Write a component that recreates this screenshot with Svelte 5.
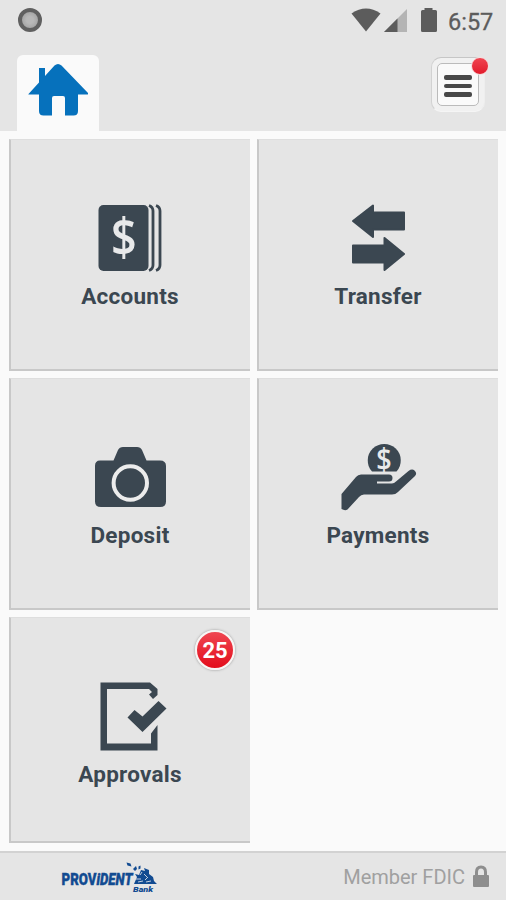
<script>
  const tiles = [
    { id: 'accounts', label: 'Accounts', view: '1 0 120 80' },
    { id: 'transfer', label: 'Transfer', view: '-1 0 120 80' },
    { id: 'deposit', label: 'Deposit', view: '1 -1 120 80' },
    { id: 'payments', label: 'Payments', view: '-1 -1 120 80' },
    { id: 'approvals', label: 'Approvals', view: '1 -2 120 80', badge: 25 },
  ]
</script>

<div class="screen">
  <header>
    <div class="status">
      <span class="recording"></span>
      <div class="indicators">
        <svg width="104" height="32" viewBox="346 4 104 32">
          <path d="M351.500 13.500Q366 3.500 380.500 13.500L366 31.500Z" />
          <path class="faded" d="M407 9V32H384Z" />
          <path d="M397.500 18.500V32H384Z" />
          <path d="M424.500 8h8v2h3q1.500 0 1.500 1.500V30.500q0 1.500-1.500 1.500h-13q-1.500 0-1.500-1.500V11.500q0-1.500 1.500-1.500h2Z" />
        </svg>
        <span class="clock">6:57</span>
      </div>
    </div>
    <nav>
      <div class="home">
        <svg width="60" height="54" viewBox="28 63 60 54">
          <path d="M28.500 94L39 82.500V68H45V76L54.500 65.500Q58 62.500 61.500 65.500L88 93Q88.500 94.500 87 94.500H78V111Q78 115.500 73.500 115.500H65V98Q65 96 63 96H54Q52 96 52 98V115.500H43.500Q39 115.500 39 111V94.500H29Q28 94.500 28.500 94Z" />
        </svg>
      </div>
      <button class="menu" aria-label="Menu">
        <span class="bars"><i></i><i></i><i></i></span>
        <span class="dot"></span>
      </button>
    </nav>
  </header>

  <main>
    {#each tiles as tile (tile.id)}
      <div class="tile">
        <svg class="icon" width="120" height="80" viewBox={tile.view}>
          {#if tile.id === 'accounts'}
            <rect x="28.500" y="10" width="50" height="66" rx="5" />
            <path class="line" d="M79 10.500Q83 12 83 16V70Q83 74 79 75.500M86 10.500Q90 12 90 16V70Q90 74 86 75.500" />
            <text transform="translate(54 60.500) scale(0.85 1)" class="dollar large">$</text>
          {:else if tile.id === 'transfer'}
            <path class="round" d="M33 26L53 10.500V17.500H84V34.500H53V42Z" />
            <path class="round" d="M84 59L64.500 43V50.500H33V67.500H64.500V75Z" />
          {:else if tile.id === 'deposit'}
            <path d="M30 25.500H43.500L48 15Q49.500 12 53 12H67Q70.500 12 72 15L76.500 25.500H90Q96 25.500 96 31V66.500Q96 72 90 72H31Q25 72 25 66.500V31Q25 25.500 30 25.500Z" />
            <circle class="lens" cx="60.300" cy="48" r="16.700" />
          {:else if tile.id === 'payments'}
            <path d="M52 36.500A16.500 16.500 0 1 1 76.500 36.500Z" />
            <text transform="translate(64 34.500) scale(0.9 1)" class="dollar small">$</text>
            <path d="M21.500 59L36 42Q38 39.500 41 39.500H69Q72.500 39.500 72.500 43Q72.500 46.500 69 46.500H57V48.500H72Q74 48.500 76 46.500L88.500 36Q92 33.500 94.500 35.500Q97.500 38 95 41L78 57Q75.500 59.500 72 59.500H44Q41 59.500 39 62L27.500 74.500Q25 76 21.500 74Z" />
          {:else}
            <path d="M30.500 7.500H80L87.500 14V20L83 24L79 19.500L82 17L79 14H37V68.500H81V58.500L87.500 50V75.500H30.500Z" />
            <path d="M57.500 42.500L64.500 35L72.500 41.500L88.500 26L96.500 33.500L72.500 57Z" />
          {/if}
        </svg>
        <span class="label">{tile.label}</span>
        {#if tile.badge}
          <span class="badge">{tile.badge}</span>
        {/if}
      </div>
    {/each}
  </main>

  <footer>
    <svg class="brand" width="100" height="36" viewBox="58 858 100 36">
      <text x="61.500" y="884" class="provident" textLength="71" lengthAdjust="spacingAndGlyphs">PROV<tspan class="slant">iDENT</tspan></text>
      <path d="M126.500 861.500l4 1l1 3l-4-1ZM133 868l3-3l1 3l-2 2ZM138.500 865.500l2-1v3l-2 1Z" />
      <path d="M134 883l3-7l-2-3l4 1l2-5l4 1l-1-3l5 2v4l4 3l1 4l3 3Z" />
      <path class="sketch" d="M136 878h5m3-5l3 3m-9 5l5-1m3 1l5-1m-9-9l-2 3m8 2l-3 3" />
      <text x="133" y="890.500" textLength="20" lengthAdjust="spacingAndGlyphs" class="bank">Bank</text>
    </svg>
    <div class="member">
      <span>Member FDIC</span>
      <svg width="18" height="24" viewBox="0 0 18 24">
        <path class="shackle" d="M4.500 11V7Q4.500 2 9 2T13.500 7V11" />
        <rect x="1" y="10" width="16" height="12" rx="1" />
      </svg>
    </div>
  </footer>
</div>

<style>
  :global(body) {
    margin: 0;
  }
  .screen {
    display: flex;
    flex-direction: column;
    height: 900px;
    background: #fafafa;
    font-family: Roboto, sans-serif;
    color: #3b4751;
  }
  svg {
    display: block;
  }
  header {
    height: 131px;
    background: #e5e5e5;
  }
  .status {
    display: flex;
    justify-content: space-between;
    height: 40px;
    padding: 0 13px 0 18px;
    align-items: center;
  }
  .recording {
    box-sizing: border-box;
    width: 24px;
    height: 24px;
    border: 4px solid #606060;
    border-radius: 50%;
    background: radial-gradient(#b8b8b8 30%, #989898);
  }
  .indicators {
    display: flex;
    align-items: center;
    fill: #5c5c5c;
  }
  .faded {
    fill: #b4b4b4;
  }
  .clock {
    width: 45px;
    margin-top: 3px;
    margin-left: -2px;
    font-size: 23.500px;
    white-space: nowrap;
    color: #5c5c5c;
    -webkit-text-stroke: 0.300px #5c5c5c;
  }
  nav {
    display: flex;
    justify-content: space-between;
    height: 91px;
  }
  .home {
    width: 82px;
    height: 76px;
    margin: 15px 0 0 17px;
    border-radius: 6px 6px 0 0;
    background: #fafafa;
    fill: #0671bc;
  }
  .home svg {
    margin: 8px 0 0 11px;
  }
  .menu {
    position: relative;
    box-sizing: border-box;
    width: 54px;
    height: 55px;
    margin: 17px 21px 0 0;
    padding: 5px;
    border: 1px solid #ddd;
    border-color: #c6c6c6 #eee #f5f5f5 #d2d2d2;
    border-radius: 10px;
    background: #f1f1f1;
  }
  .bars {
    display: flex;
    flex-direction: column;
    justify-content: center;
    gap: 4px;
    box-sizing: border-box;
    width: 42px;
    height: 43px;
    padding: 3px 6px 0;
    border: 1px solid #bbb;
    border-radius: 5px;
    background: #fafafa;
  }
  .bars i {
    height: 4.500px;
    border-radius: 2px;
    background: #484848;
  }
  .dot {
    position: absolute;
    top: -1px;
    right: -5px;
    width: 16px;
    height: 16px;
    border: 1px solid #f7dede;
    border-radius: 50%;
    background: linear-gradient(#f04450, #e21b2c);
  }
  main {
    display: grid;
    grid-template-columns: 241px 241px;
    grid-template-rows: 232px 232px 226px;
    gap: 7px;
    height: 704px;
    padding: 8px 0 8px 9px;
  }
  .tile {
    position: relative;
    display: flex;
    flex-direction: column;
    align-items: center;
    box-sizing: border-box;
    padding-top: 55px;
    border: solid #c8c8c8;
    border-width: 1px 0 2px 2px;
    border-top-color: #dedede;
    background: #e5e5e5;
  }
  .icon {
    fill: #3b4751;
  }
  .line {
    fill: none;
    stroke: #3b4751;
    stroke-width: 2.800;
  }
  .round {
    stroke: #3b4751;
    stroke-width: 2;
    stroke-linejoin: round;
  }
  .lens {
    fill: none;
    stroke: #ececec;
    stroke-width: 4;
  }
  .dollar {
    fill: #e8e9ea;
    text-anchor: middle;
    font-family: 'Open Sans', sans-serif;
    font-weight: 600;
  }
  .large {
    font-size: 53px;
  }
  .small {
    font-size: 30px;
  }
  .label {
    margin-top: 8px;
    margin-left: -1px;
    font-size: 22.500px;
    font-weight: 700;
    line-height: 26px;
    letter-spacing: 0.250px;
  }
  .badge {
    position: absolute;
    top: 12px;
    right: 15px;
    width: 36px;
    height: 36px;
    border: 2px solid #f8f5f4;
    border-radius: 50%;
    background: linear-gradient(#ef4651, #e30d1b);
    box-shadow: 0 0 2px 1px #bfbfbf;
    color: #fff;
    font-size: 22px;
    font-weight: 700;
    line-height: 37px;
    text-align: center;
  }
  footer {
    display: flex;
    flex: 1;
    align-items: center;
    justify-content: space-between;
    box-sizing: border-box;
    padding: 0 16px 0 58px;
    border-top: 2px solid #d2d2d2;
    background: #e5e5e5;
  }
  .brand {
    fill: #124b91;
  }
  .provident {
    font-size: 16.500px;
    font-weight: 900;
    stroke: #124b91;
    stroke-width: 0.400;
  }
  .slant {
    font-style: italic;
  }
  .sketch {
    fill: none;
    stroke: #c3cfdf;
  }
  .bank {
    font-size: 8px;
    font-style: italic;
    font-weight: 900;
  }
  .member {
    display: flex;
    align-items: center;
    gap: 7px;
    color: #a0a0a0;
    font-size: 20px;
    fill: #8e8e8e;
  }
  .shackle {
    fill: none;
    stroke: #8e8e8e;
    stroke-width: 3;
  }
</style>
